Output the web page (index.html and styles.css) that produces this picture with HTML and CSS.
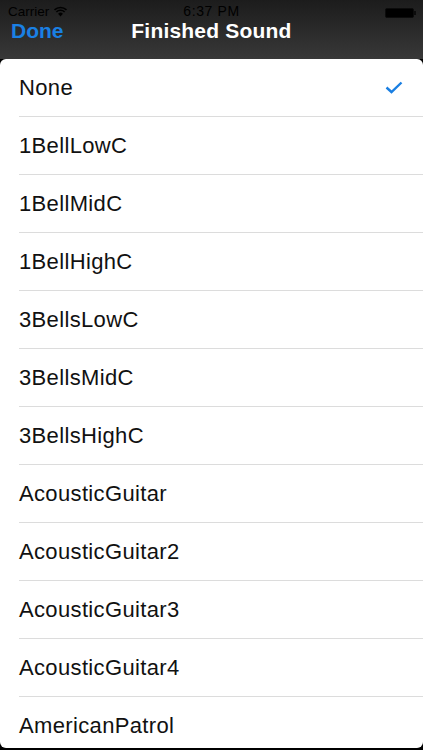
FILE: index.html
```html
<!DOCTYPE html>
<html lang="en">

<head>
    <meta charset="UTF-8">
    <meta name="viewport" content="width=device-width, initial-scale=1.0">
    <title>Finished Sound</title>
    <link rel="stylesheet" href="styles.css">
</head>

<body>

    <div class="top">
        <div class="status-bar">
            <div class="carrier">
                <span>Carrier</span>
                <svg class="wifi" width="15" height="11" viewBox="0 0 14 11">
                    <path d="M7 10.5 L4.6 7.8 A3.4 3.4 0 0 1 9.4 7.8 Z" fill="#000" />
                    <path d="M2.9 6 A5.8 5.8 0 0 1 11.1 6" stroke="#000" stroke-width="1.6" fill="none" />
                    <path d="M1 3.9 A8.6 8.6 0 0 1 13 3.9" stroke="#000" stroke-width="1.6" fill="none" />
                </svg>
            </div>
            <div class="time">6:37 PM</div>
            <div class="battery">
                <div class="battery-body"></div>
                <div class="battery-tip"></div>
            </div>
        </div>
        <div class="nav-bar">
            <span class="done">Done</span>
            <span class="title">Finished Sound</span>
        </div>
    </div>

    <div class="sheet">
        <div class="row selected"><span class="label">None</span>
            <svg class="check" width="18" height="13" viewBox="0 0 18 13">
                <path d="M1.5 6.5 L6.5 11 L16.5 1.5" stroke="#1a7fe2" stroke-width="2.4" fill="none" />
            </svg>
        </div>
        <div class="row"><span class="label">1BellLowC</span></div>
        <div class="row"><span class="label">1BellMidC</span></div>
        <div class="row"><span class="label">1BellHighC</span></div>
        <div class="row"><span class="label">3BellsLowC</span></div>
        <div class="row"><span class="label">3BellsMidC</span></div>
        <div class="row"><span class="label">3BellsHighC</span></div>
        <div class="row"><span class="label">AcousticGuitar</span></div>
        <div class="row"><span class="label">AcousticGuitar2</span></div>
        <div class="row"><span class="label">AcousticGuitar3</span></div>
        <div class="row"><span class="label">AcousticGuitar4</span></div>
        <div class="row"><span class="label">AmericanPatrol</span></div>
    </div>

</body>

</html>
```

FILE: styles.css
```css
body {
    margin: 0;
    padding: 0;
    width: 423px;
    height: 750px;
    overflow: hidden;
    font-family: "Liberation Sans", Arial, sans-serif;
    background-color: #000;
}

/* barra superior escura */
.top {
    height: 59px;
    background: linear-gradient(#1c1c1c, #383838);
}

.status-bar {
    height: 19px;
    box-sizing: border-box;
    display: flex;
    align-items: flex-start;
    justify-content: space-between;
    padding: 4px 7px 0 8px;
    font-size: 13.5px;
    line-height: 15px;
    position: relative;
}

.carrier {
    display: flex;
    align-items: center;
    gap: 4px;
    color: #000;
}

.time {
    position: absolute;
    left: 0;
    right: 0;
    top: 3px;
    text-align: center;
    color: #000;
    font-size: 14px;
    line-height: 16px;
    letter-spacing: 0.6px;
}

.battery {
    display: flex;
    align-items: center;
    margin-top: 4px;
}

.battery-body {
    width: 27px;
    height: 8px;
    background-color: #000;
    border: 1px solid #0c0c0c;
    border-radius: 2px;
}

.battery-tip {
    width: 2px;
    height: 4px;
    background-color: #0c0c0c;
}

.nav-bar {
    height: 24px;
    position: relative;
    padding-left: 11px;
    font-size: 21px;
    font-weight: bold;
    line-height: 24px;
}

.done {
    color: #1a80e4;
}

.title {
    position: absolute;
    left: 0;
    right: 0;
    top: 0;
    text-align: center;
    color: #fff;
    letter-spacing: 0.2px;
}

/* lista de sons */
.sheet {
    height: 689px;
    background-color: #fff;
    border-radius: 6px;
    overflow: hidden;
}

.row {
    height: 58px;
    margin-left: 19px;
    border-bottom: 1px solid #dcdcdc;
    box-sizing: border-box;
    display: flex;
    align-items: center;
    justify-content: space-between;
    padding-right: 20px;
    font-size: 22px;
    letter-spacing: 0.35px;
    color: #111;
}

.label {
    padding-top: 1px;
}
```
